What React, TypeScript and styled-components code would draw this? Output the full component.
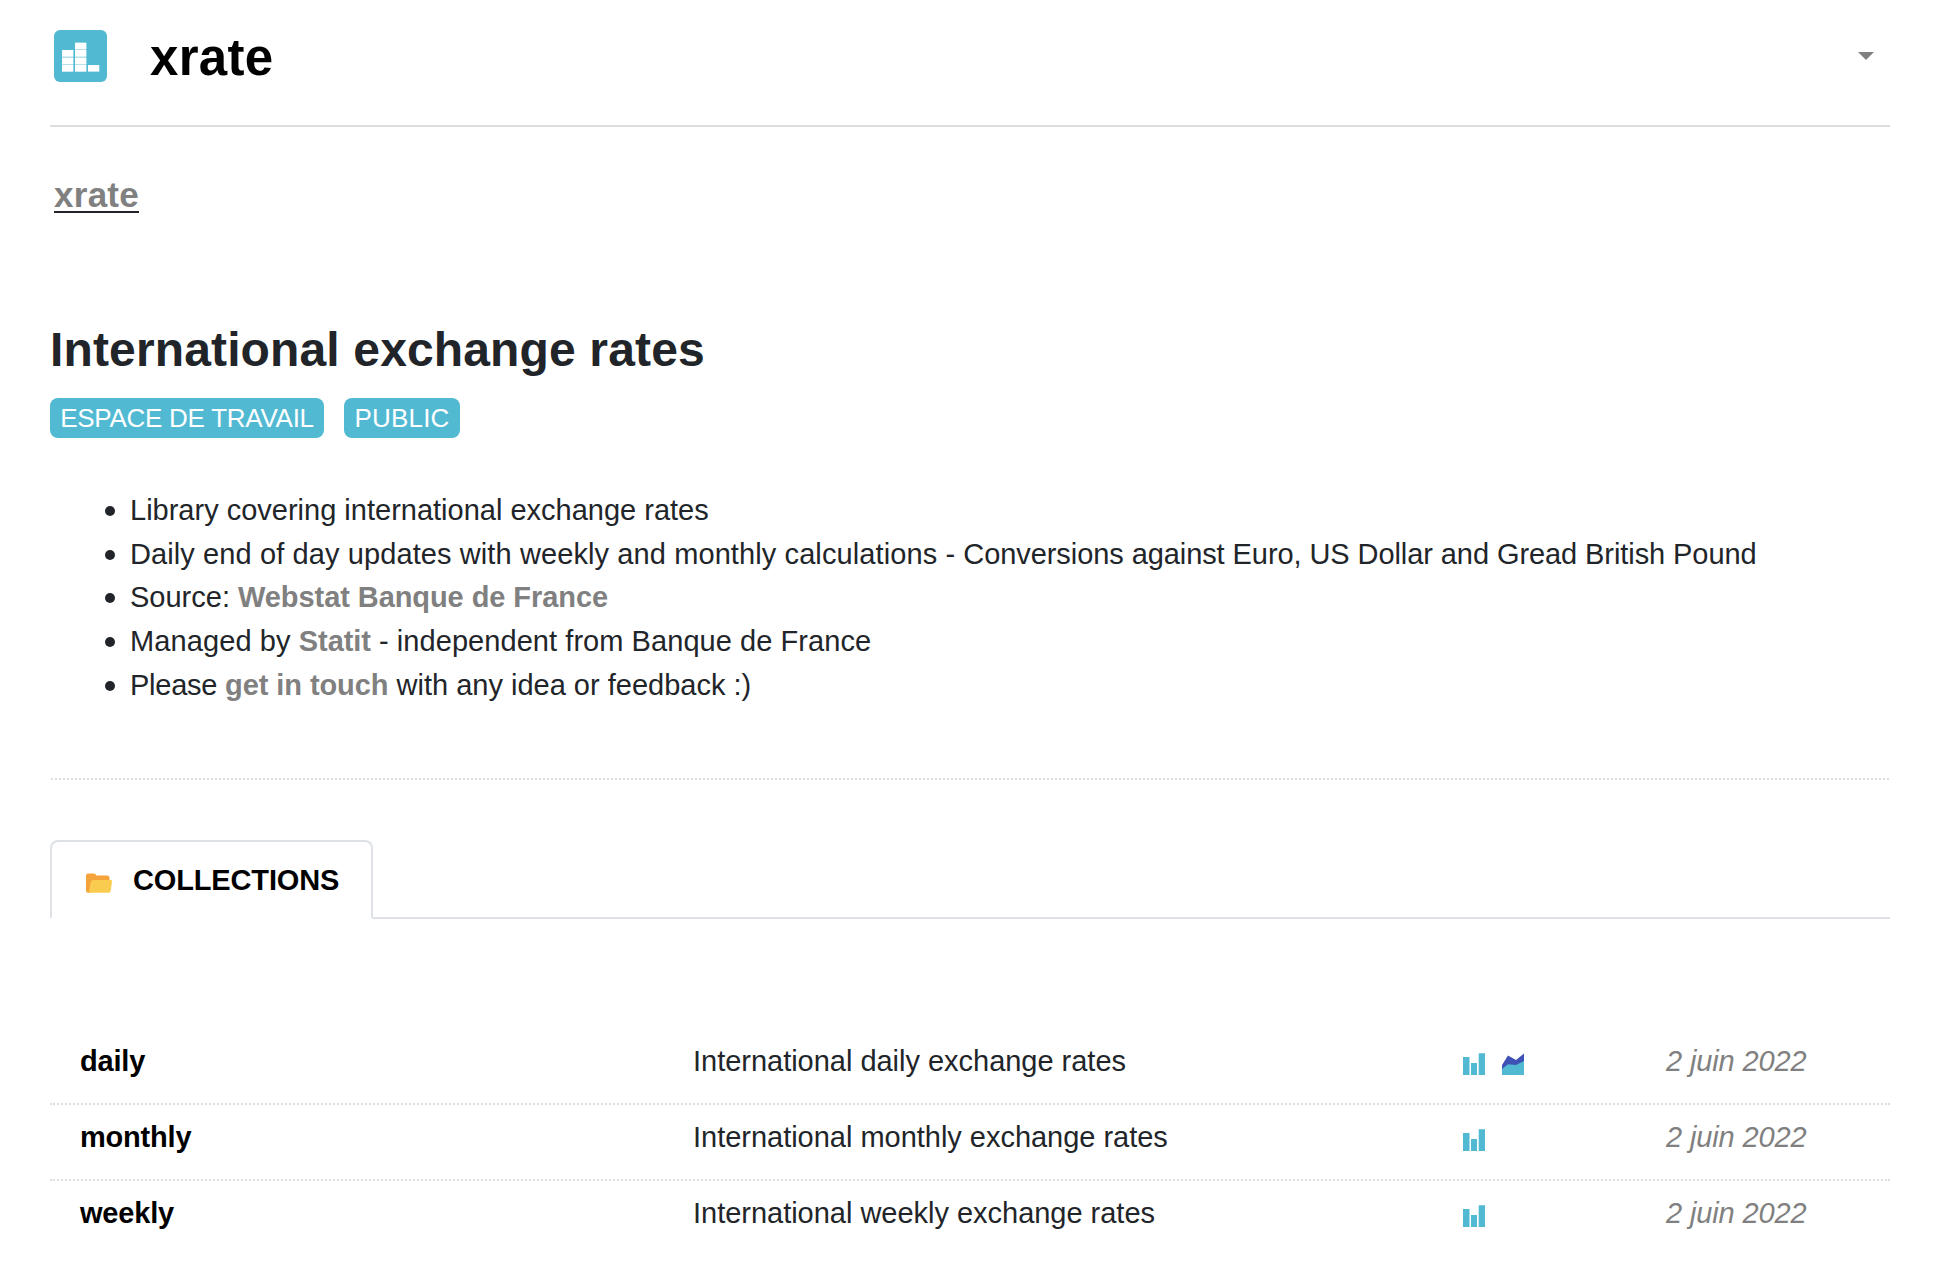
import React from "react";
import styled, { createGlobalStyle } from "styled-components";

const GlobalStyle = createGlobalStyle`
  *, *::before, *::after { box-sizing: border-box; }
  body {
    margin: 0;
    background: #fff;
    color: #212529;
    font-family: "Liberation Sans", Arial, Helvetica, sans-serif;
    font-size: 29px;
  }
`;

const Page = styled.main`
  display: flex;
  flex-direction: column;
  height: 1285px;
  padding: 0 43px 0 50px;
`;

const Header = styled.header`
  display: flex;
  align-items: flex-start;
  height: 127px;
  border-bottom: 2px solid #ddd;
`;

const Logo = styled.svg`
  display: block;
  width: 53px;
  height: 52px;
  margin: 30px 43px 0 4px;
`;

const Title = styled.h1`
  flex: 1;
  margin: 28px 0 0;
  color: #000;
  font-size: 51px;
  line-height: 60px;
  letter-spacing: 0.3px;
`;

const MenuButton = styled.button`
  display: block;
  margin: 52px 16px 0 0;
  padding: 0;
  border: 0;
  background: none;
`;

const Caret = styled.svg`
  display: block;
  width: 16px;
  height: 8px;
`;

const Breadcrumb = styled.nav`
  display: flex;
  margin-top: 52px;
  padding-left: 4px;
`;

const Crumb = styled.a`
  border-bottom: 2px solid #212529;
  color: #808080;
  font-size: 35px;
  font-weight: bold;
  line-height: 32px;
  letter-spacing: 0.27px;
`;

const Heading = styled.h2`
  margin: 108px 0 0;
  font-size: 48px;
  line-height: 58px;
  letter-spacing: 0.14px;
`;

const Badges = styled.div`
  display: flex;
  gap: 20px;
  margin-top: 19px;
`;

const Badge = styled.span<{ $width: number; $tracking: number }>`
  width: ${(p) => p.$width}px;
  height: 40px;
  border-radius: 8px;
  background: #52b9d3;
  color: #fff;
  font-size: 26px;
  line-height: 40px;
  letter-spacing: ${(p) => p.$tracking}px;
  text-align: center;
  white-space: nowrap;
`;

const Facts = styled.ul`
  display: flex;
  flex-direction: column;
  margin: 51px 0 0;
  padding: 0 0 0 55px;
  list-style: none;
`;

const Fact = styled.li`
  display: flex;
  align-items: center;
  gap: 15px;
  height: 43.7px;
  line-height: 43.7px;
  white-space: nowrap;

  &::before {
    content: "";
    width: 10px;
    height: 10px;
    border-radius: 50%;
    background: #212529;
  }
`;

const Phrase = styled.span<{ $tracking: number }>`
  letter-spacing: ${(p) => p.$tracking}px;
`;

const Link = styled.a`
  color: #808080;
  font-weight: bold;
  letter-spacing: -0.07px;
`;

const Divider = styled.hr`
  width: 1838px;
  margin: 70.5px 0 0 1px;
  border: 0;
  border-top: 2px dotted #ddd;
`;

const Tabs = styled.div`
  display: flex;
  margin-top: 60px;

  &::after {
    content: "";
    flex: 1;
    border-bottom: 2px solid #dee2e6;
  }
`;

const Tab = styled.div`
  display: flex;
  width: 323px;
  height: 79px;
  padding-left: 34px;
  border: 2px solid #dee2e6;
  border-bottom-color: #fff;
  border-radius: 8px 8px 0 0;
  color: #000;
  font-weight: bold;
  line-height: 76px;
  letter-spacing: -0.14px;
`;

const FolderIcon = styled.svg`
  width: 26px;
  height: 20px;
  margin: 31px 21px 0 0;
`;

const Rows = styled.div`
  margin-top: 110px;
`;

const Row = styled.div`
  display: grid;
  grid-template-columns: 613px 770px 203px 1fr;
  height: 76px;
  padding-left: 30px;
  line-height: 64px;

  &:not(:last-child) {
    border-bottom: 2px dotted #ddd;
  }
`;

const Name = styled.span`
  color: #000;
  font-weight: bold;
  letter-spacing: -0.2px;
`;

const Description = styled.span`
  letter-spacing: -0.02px;
`;

const Icons = styled.span`
  display: flex;
  gap: 17px;
  padding-top: 24px;
`;

const ChartIcon = styled.svg`
  width: 22px;
  height: 22px;
`;

const DateText = styled.time`
  color: #808080;
  font-style: italic;
  letter-spacing: -0.12px;
`;

const BarsIcon = () => (
  <ChartIcon viewBox="0 0 22 22" fill="#52b9d3">
    <path d="M0 4h6.5v18H0zM8 10h6v12H8zM15.7 0.3H22V22h-6.3z" />
  </ChartIcon>
);

const AreaIcon = () => (
  <ChartIcon viewBox="0 0 22 22">
    <path d="M0 12 6 2.5 14 7 22 .4V10L14 13 6 12.5 0 17z" fill="#3f51b5" />
    <path d="M0 16 6 11.3 14 12 22 8V22H0z" fill="#52b9d3" />
  </ChartIcon>
);

const collections = [
  { name: "daily", description: "International daily exchange rates", area: true },
  { name: "monthly", description: "International monthly exchange rates", area: false },
  { name: "weekly", description: "International weekly exchange rates", area: false },
];

const logoCells = [
  [8, 20], [8, 27.7], [8, 35],
  [21, 12.7], [21, 20], [21, 27.7], [21, 35],
  [34, 35],
];

export default function App() {
  return (
    <>
      <GlobalStyle />
      <Page>
        <Header>
          <Logo viewBox="0 0 53 52">
            <rect width="53" height="52" rx="6" fill="#52b9d3" />
            <path d="M8 20h11.3v21.6H8zM21 12.7h11.3v28.9H21z" fill="#fff" opacity="0.4" />
            {logoCells.map(([x, y]) => (
              <rect key={`${x}-${y}`} x={x} y={y} width="11.3" height="6.6" fill="#fff" />
            ))}
          </Logo>
          <Title>xrate</Title>
          <MenuButton aria-label="Menu">
            <Caret viewBox="0 0 16 8">
              <path d="M0 0h16L8 8z" fill="#808080" />
            </Caret>
          </MenuButton>
        </Header>

        <Breadcrumb>
          <Crumb>xrate</Crumb>
        </Breadcrumb>

        <Heading>International exchange rates</Heading>
        <Badges>
          <Badge $width={274} $tracking={-0.27}>ESPACE DE TRAVAIL</Badge>
          <Badge $width={116} $tracking={0.2}>PUBLIC</Badge>
        </Badges>

        <Facts>
          <Fact><span>Library covering international exchange rates</span></Fact>
          <Fact>
            <span>
              <Phrase $tracking={0.1}>
                Daily end of day updates with weekly and monthly calculations -{" "}
              </Phrase>
              <Phrase $tracking={-0.08}>
                Conversions against Euro, US Dollar and Gread British Pound
              </Phrase>
            </span>
          </Fact>
          <Fact><span>Source: <Link>Webstat Banque de France</Link></span></Fact>
          <Fact>
            <span>
              <Phrase $tracking={0.1}>Managed by </Phrase>
              <Link>Statit</Link>
              <Phrase $tracking={0.06}> - independent from Banque de France</Phrase>
            </span>
          </Fact>
          <Fact>
            <span>
              <Phrase $tracking={-0.25}>Please </Phrase>
              <Link>get in touch</Link>
              <Phrase $tracking={0}> with any idea or feedback :)</Phrase>
            </span>
          </Fact>
        </Facts>

        <Divider />

        <Tabs>
          <Tab>
            <FolderIcon viewBox="0 0 26 20">
              <path d="M0 2.5Q0 .5 2 .5H8Q9.5 .5 10.5 2.5H21.5Q23.5 2.5 23.5 5V8L4 19.7H2Q0 19.7 0 17.7z" fill="#f5a33b" />
              <path d="M5 8.5Q5.3 7 7 7H24.5Q26.2 7 26 8.5L24.7 18Q24.4 19.7 22.7 19.7H2.8z" fill="#f9cc50" />
            </FolderIcon>
            COLLECTIONS
          </Tab>
        </Tabs>

        <Rows>
          {collections.map((c) => (
            <Row key={c.name}>
              <Name>{c.name}</Name>
              <Description>{c.description}</Description>
              <Icons>
                <BarsIcon />
                {c.area && <AreaIcon />}
              </Icons>
              <DateText>2 juin 2022</DateText>
            </Row>
          ))}
        </Rows>
      </Page>
    </>
  );
}
